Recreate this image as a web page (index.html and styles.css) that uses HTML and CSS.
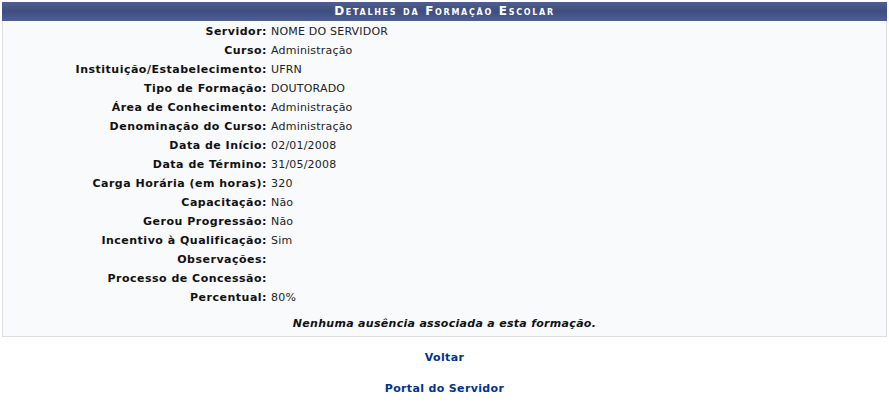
FILE: index.html
```html
<!DOCTYPE html>
<html lang="pt">
<head>
<meta charset="utf-8">
<title>Detalhes da Formação Escolar</title>
<link rel="stylesheet" href="styles.css">
</head>
<body>
<table class="visualizacao">
  <caption class="cap">Detalhes da Formação Escolar</caption>
  <tbody>
    <tr><th>Servidor:</th><td>NOME DO SERVIDOR</td></tr>
    <tr><th>Curso:</th><td>Administração</td></tr>
    <tr><th>Instituição/Estabelecimento:</th><td>UFRN</td></tr>
    <tr><th>Tipo de Formação:</th><td>DOUTORADO</td></tr>
    <tr><th>Área de Conhecimento:</th><td>Administração</td></tr>
    <tr><th>Denominação do Curso:</th><td>Administração</td></tr>
    <tr><th>Data de Início:</th><td>02/01/2008</td></tr>
    <tr><th>Data de Término:</th><td>31/05/2008</td></tr>
    <tr><th>Carga Horária (em horas):</th><td>320</td></tr>
    <tr><th>Capacitação:</th><td>Não</td></tr>
    <tr><th>Gerou Progressão:</th><td>Não</td></tr>
    <tr><th>Incentivo à Qualificação:</th><td>Sim</td></tr>
    <tr><th>Observações:</th><td></td></tr>
    <tr><th>Processo de Concessão:</th><td></td></tr>
    <tr><th>Percentual:</th><td>80%</td></tr>
    <tr><td colspan="2" class="empty">Nenhuma ausência associada a esta formação.</td></tr>
  </tbody>
</table>
<div class="links">
  <a href="#" class="link">Voltar</a>
  <a href="#" class="link">Portal do Servidor</a>
</div>
</body>
</html>
```
FILE: styles.css
```css
body {
  margin: 2px;
  font-family: "DejaVu Sans", Verdana, sans-serif;
  font-size: 11px;
  color: #222;
  background: #fff;
}
.visualizacao {
  width: 885px;
  border-collapse: collapse;
  background: #f9fafc;
  border: 1px solid #dcdfe3;
  border-top: none;
}
.cap {
  height: 19px;
  line-height: 19px;
  background: linear-gradient(#4e5e93, #3f4e80 50%, #4e5f95);
  color: #fff;
  font-weight: bold;
  font-variant: small-caps;
  font-size: 12px;
  letter-spacing: 1.7px;
  text-align: center;
}
.visualizacao th {
  width: 264px;
  text-align: right;
  font-weight: bold;
  color: #111;
  letter-spacing: 0.5px;
  padding: 0 4px 0 0;
  height: 19px;
  white-space: nowrap;
}
.visualizacao td {
  padding: 0;
  height: 19px;
  letter-spacing: 0.2px;
}
.visualizacao tr:first-child th, .visualizacao tr:first-child td {
  padding-top: 1px;
}
.visualizacao td.empty {
  text-align: center;
  font-weight: bold;
  font-style: italic;
  letter-spacing: 0.3px;
  padding: 7px 0 3px;
  color: #111;
}
.links {
  display: flex;
  flex-direction: column;
  align-items: center;
  gap: 18px;
  margin-top: 14px;
}
.link {
  color: #003390;
  font-weight: bold;
  letter-spacing: 0.35px;
  text-decoration: none;
}
```
